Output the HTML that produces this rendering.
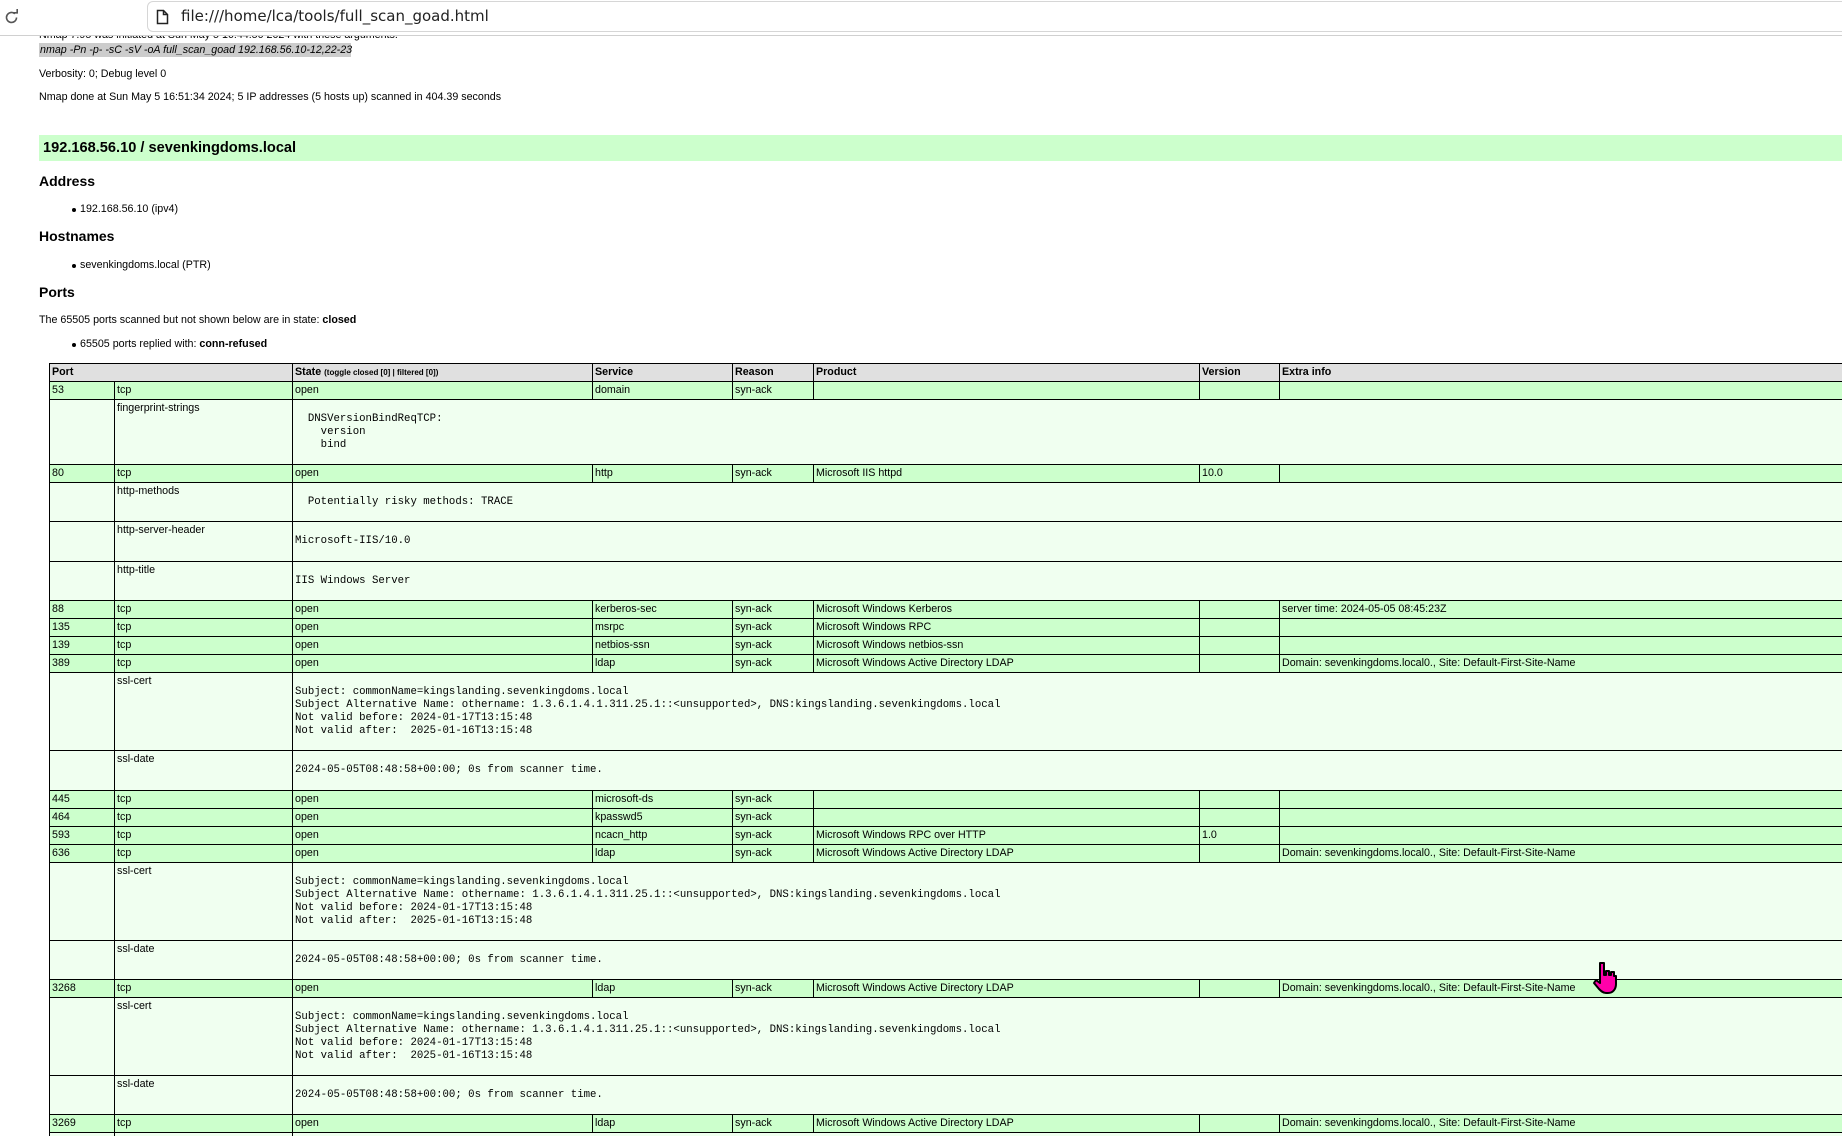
<!DOCTYPE html>
<html><head><meta charset="utf-8"><style>
*{box-sizing:border-box}
html,body{margin:0;padding:0;overflow:hidden;height:1136px}
body{width:1842px;background:#fff;font-family:"Liberation Sans",Arial,sans-serif;font-size:10.7px;color:#000}
#wrap{position:relative;width:1842px;height:1136px;overflow:hidden}
.tb{position:absolute;left:0;top:0;width:1842px;height:36px;background:#fff;border-bottom:1px solid #d0d0d0;z-index:5}
.url{position:absolute;left:147px;top:1px;width:1720px;height:31px;border:1px solid #d6d6d6;border-radius:6px;background:#fff}
.url span{position:absolute;left:33px;top:5px;font-size:15px;font-family:"DejaVu Sans","Liberation Sans",sans-serif;color:#222}
.p{position:absolute;left:39px;white-space:nowrap}
h2{position:absolute;left:39px;margin:0;font-size:14px;font-weight:bold}
.bar{position:absolute;left:39px;top:135px;width:1803px;height:26px;background:#ccffcc;font-size:14.6px;font-weight:bold;padding:5px 4px}
.li{position:absolute;left:80px;white-space:nowrap}
.li:before{content:"";position:absolute;left:-8px;top:5px;width:4px;height:4px;border-radius:50%;background:#000}
table{position:absolute;left:49px;top:363px;border-collapse:collapse;table-layout:fixed;width:1793px}
td,th{border:1px solid #000;padding:2px 2px;line-height:13px;font-size:10.7px;text-align:left;vertical-align:top;white-space:nowrap;overflow:hidden}
th{background:#e0e0e0;font-weight:bold}
tr.o td{background:#ccffcc;height:18px}
tr.s td{background:#f0fff0}
pre{margin:0;font-family:"Liberation Mono",monospace;font-size:10.7px;line-height:13px}
td.pc{vertical-align:middle;padding:0 2px}
tr.h65 td{height:65px} tr.h40 td{height:40px} tr.h39 td{height:39px} tr.h78 td{height:78px}
</style></head><body><div id="wrap">
<div class="tb">
<svg style="position:absolute;left:3px;top:9px" width="17" height="17" viewBox="0 0 17 17"><path d="M13.5 8.5a5 5 0 1 1-1.6-3.7" fill="none" stroke="#555" stroke-width="1.6"/><path d="M10 3.8h4.2V0" fill="none" stroke="#555" stroke-width="1.6"/></svg>
<div class="url"><svg style="position:absolute;left:8px;top:7px" width="13" height="16" viewBox="0 0 13 16"><path d="M1.5 1.5h6l4 4v9h-10z M7.5 1.5v4h4" fill="none" stroke="#222" stroke-width="1.5"/></svg><span>file:///home/lca/tools/full_scan_goad.html</span></div>
</div>
<div class="p" style="top:29px">Nmap 7.95 was initiated at Sun May 5 16:44:50 2024 with these arguments:</div>
<div class="p" style="top:43px;background:#ccc;font-style:italic;padding:0 1px;height:14px;line-height:14px;width:312px">nmap -Pn -p- -sC -sV -oA full_scan_goad 192.168.56.10-12,22-23</div>
<div class="p" style="top:68px">Verbosity: 0; Debug level 0</div>
<div class="p" style="top:91px">Nmap done at Sun May 5 16:51:34 2024; 5 IP addresses (5 hosts up) scanned in 404.39 seconds</div>
<div class="bar">192.168.56.10 / sevenkingdoms.local</div>
<h2 style="top:173px">Address</h2>
<div class="li" style="top:203px">192.168.56.10 (ipv4)</div>
<h2 style="top:228px">Hostnames</h2>
<div class="li" style="top:259px">sevenkingdoms.local (PTR)</div>
<h2 style="top:284px">Ports</h2>
<div class="p" style="top:314px">The 65505 ports scanned but not shown below are in state: <b>closed</b></div>
<div class="li" style="top:338px">65505 ports replied with: <b>conn-refused</b></div>
<table>
<colgroup><col style="width:65px"><col style="width:178px"><col style="width:300px"><col style="width:140px"><col style="width:81px"><col style="width:386px"><col style="width:80px"><col style="width:563px"></colgroup>
<tr><th colspan="2" style="height:18px">Port</th><th>State <span style="font-size:8px">(toggle closed [0] | filtered [0])</span></th><th>Service</th><th>Reason</th><th>Product</th><th>Version</th><th>Extra info</th></tr>
<tr class="o"><td>53</td><td>tcp</td><td>open</td><td>domain</td><td>syn-ack</td><td></td><td></td><td></td></tr>
<tr class="s h65"><td></td><td>fingerprint-strings</td><td colspan="6" class="pc"><pre>  DNSVersionBindReqTCP:
    version
    bind</pre></td></tr>
<tr class="o"><td>80</td><td>tcp</td><td>open</td><td>http</td><td>syn-ack</td><td>Microsoft IIS httpd</td><td>10.0</td><td></td></tr>
<tr class="s h39"><td></td><td>http-methods</td><td colspan="6" class="pc"><pre>  Potentially risky methods: TRACE</pre></td></tr>
<tr class="s h40"><td></td><td>http-server-header</td><td colspan="6" class="pc"><pre>Microsoft-IIS/10.0</pre></td></tr>
<tr class="s h39"><td></td><td>http-title</td><td colspan="6" class="pc"><pre>IIS Windows Server</pre></td></tr>
<tr class="o"><td>88</td><td>tcp</td><td>open</td><td>kerberos-sec</td><td>syn-ack</td><td>Microsoft Windows Kerberos</td><td></td><td>server time: 2024-05-05 08:45:23Z</td></tr>
<tr class="o"><td>135</td><td>tcp</td><td>open</td><td>msrpc</td><td>syn-ack</td><td>Microsoft Windows RPC</td><td></td><td></td></tr>
<tr class="o"><td>139</td><td>tcp</td><td>open</td><td>netbios-ssn</td><td>syn-ack</td><td>Microsoft Windows netbios-ssn</td><td></td><td></td></tr>
<tr class="o"><td>389</td><td>tcp</td><td>open</td><td>ldap</td><td>syn-ack</td><td>Microsoft Windows Active Directory LDAP</td><td></td><td>Domain: sevenkingdoms.local0., Site: Default-First-Site-Name</td></tr>
<tr class="s h78"><td></td><td>ssl-cert</td><td colspan="6" class="pc"><pre>Subject: commonName=kingslanding.sevenkingdoms.local
Subject Alternative Name: othername: 1.3.6.1.4.1.311.25.1::&lt;unsupported&gt;, DNS:kingslanding.sevenkingdoms.local
Not valid before: 2024-01-17T13:15:48
Not valid after:  2025-01-16T13:15:48</pre></td></tr>
<tr class="s h40"><td></td><td>ssl-date</td><td colspan="6" class="pc"><pre>2024-05-05T08:48:58+00:00; 0s from scanner time.</pre></td></tr>
<tr class="o"><td>445</td><td>tcp</td><td>open</td><td>microsoft-ds</td><td>syn-ack</td><td></td><td></td><td></td></tr>
<tr class="o"><td>464</td><td>tcp</td><td>open</td><td>kpasswd5</td><td>syn-ack</td><td></td><td></td><td></td></tr>
<tr class="o"><td>593</td><td>tcp</td><td>open</td><td>ncacn_http</td><td>syn-ack</td><td>Microsoft Windows RPC over HTTP</td><td>1.0</td><td></td></tr>
<tr class="o"><td>636</td><td>tcp</td><td>open</td><td>ldap</td><td>syn-ack</td><td>Microsoft Windows Active Directory LDAP</td><td></td><td>Domain: sevenkingdoms.local0., Site: Default-First-Site-Name</td></tr>
<tr class="s h78"><td></td><td>ssl-cert</td><td colspan="6" class="pc"><pre>Subject: commonName=kingslanding.sevenkingdoms.local
Subject Alternative Name: othername: 1.3.6.1.4.1.311.25.1::&lt;unsupported&gt;, DNS:kingslanding.sevenkingdoms.local
Not valid before: 2024-01-17T13:15:48
Not valid after:  2025-01-16T13:15:48</pre></td></tr>
<tr class="s h39"><td></td><td>ssl-date</td><td colspan="6" class="pc"><pre>2024-05-05T08:48:58+00:00; 0s from scanner time.</pre></td></tr>
<tr class="o"><td>3268</td><td>tcp</td><td>open</td><td>ldap</td><td>syn-ack</td><td>Microsoft Windows Active Directory LDAP</td><td></td><td>Domain: sevenkingdoms.local0., Site: Default-First-Site-Name</td></tr>
<tr class="s h78"><td></td><td>ssl-cert</td><td colspan="6" class="pc"><pre>Subject: commonName=kingslanding.sevenkingdoms.local
Subject Alternative Name: othername: 1.3.6.1.4.1.311.25.1::&lt;unsupported&gt;, DNS:kingslanding.sevenkingdoms.local
Not valid before: 2024-01-17T13:15:48
Not valid after:  2025-01-16T13:15:48</pre></td></tr>
<tr class="s h39"><td></td><td>ssl-date</td><td colspan="6" class="pc"><pre>2024-05-05T08:48:58+00:00; 0s from scanner time.</pre></td></tr>
<tr class="o"><td>3269</td><td>tcp</td><td>open</td><td>ldap</td><td>syn-ack</td><td>Microsoft Windows Active Directory LDAP</td><td></td><td>Domain: sevenkingdoms.local0., Site: Default-First-Site-Name</td></tr>
<tr class="s"><td style="height:10px"></td><td></td><td colspan="6"></td></tr>
</table>
<svg style="position:absolute;left:1592px;top:961px;z-index:6" width="30" height="36" viewBox="0 0 30 36"><path d="M8 2h4v12h2v-4h3v4h2v-3h3v4h2v8c0 5-3 9-8 9h-2c-3 0-5-2-7-4l-5-6 2-3 4 3z" fill="#ff00aa" stroke="#000" stroke-width="2" stroke-linejoin="round"/></svg>
</div></body></html>
